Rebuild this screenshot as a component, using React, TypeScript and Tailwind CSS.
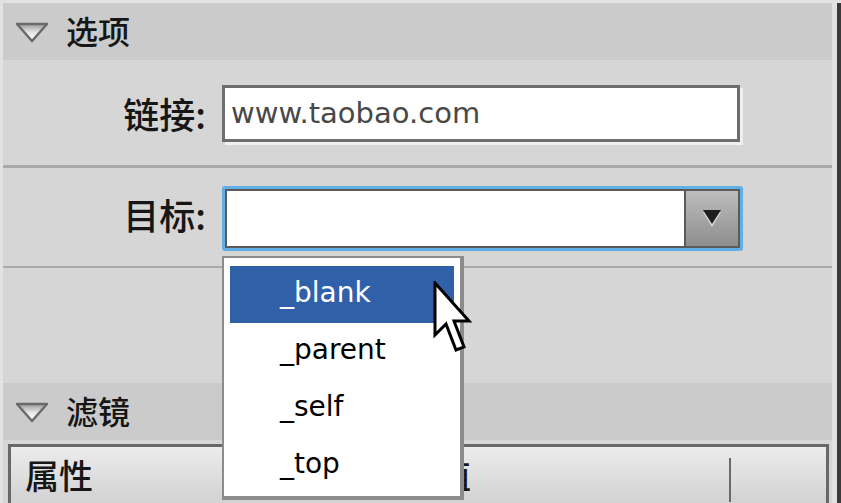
import React from "react";

const cjk = { fontFamily: '"Noto Sans CJK SC", "Noto Sans", sans-serif' };
const latin = { fontFamily: '"DejaVu Sans", Verdana, sans-serif' };

function Disclosure() {
    return (
        <svg width="34" height="22" viewBox="0 0 34 22">
            <defs>
                <linearGradient id="tri" x1="0" y1="0" x2="0" y2="1">
                    <stop offset="0" stopColor="#9a9a9a" />
                    <stop offset="0.5" stopColor="#e6e6e6" />
                    <stop offset="1" stopColor="#ffffff" />
                </linearGradient>
            </defs>
            <polygon points="2,3 32,3 17,20" fill="url(#tri)" stroke="#6a6a6a" strokeWidth="2.5" strokeLinejoin="round" />
        </svg>
    );
}

function SectionHeader({ title }: { title: string }) {
    return (
        <div className="h-[57px] bg-[#cbcbcb] flex items-center pl-[12px] gap-[17px]">
            <Disclosure />
            <span className="text-[32px] leading-none font-medium text-[#161616] pb-[4px]" style={cjk}>{title}</span>
        </div>
    );
}

function Label({ text }: { text: string }) {
    return (
        <div className="w-[203px] text-right text-[36px] leading-none font-medium text-[#161616] pt-[10px]" style={cjk}>
            {text}
        </div>
    );
}

function Cursor() {
    return (
        <svg width="40" height="74" viewBox="0 0 40 74">
            <polygon
                points="2,2 2,54 13,43 23,69 31,66 21,40 36,40"
                fill="#ffffff"
                stroke="#000000"
                strokeWidth="3"
                strokeLinejoin="miter"
            />
        </svg>
    );
}

const targets = ["_blank", "_parent", "_self", "_top"];

export default function App() {
    return (
        <div className="relative w-[841px] h-[503px] overflow-hidden bg-[#e2e2e2] flex pl-[3px] pt-[3px]">
            <div className="w-[829px] flex flex-col bg-[#d6d6d6]">
                <SectionHeader title="选项" />

                {/* link row */}
                <div className="h-[105px] flex items-start pt-[25px]">
                    <Label text="链接:" />
                    <div className="ml-[16px] w-[518px] h-[57px] border-[3px] border-[#6e6e6e] bg-white shadow-[3px_3px_0_0_#f0f0f0] flex items-center pl-[6px]">
                        <span className="text-[29px] leading-none text-[#484848]" style={latin}>www.taobao.com</span>
                    </div>
                </div>
                <div className="h-[3px] bg-[#a9a9a9]" />

                {/* target row */}
                <div className="h-[98px] flex items-start pt-[18px]">
                    <Label text="目标:" />
                    <div className="ml-[16px] w-[521px] h-[65px] border-[3px] border-[#62aee6] rounded-[3px]">
                        <div className="h-full border-[2px] border-[#5a5a5a] flex">
                            <div className="flex-1 bg-white border-r-[2px] border-[#5a5a5a]" />
                            <div className="w-[52px] bg-gradient-to-b from-[#bdbdbd] to-[#8e8e8e] flex items-center justify-center">
                                <svg width="22" height="22" viewBox="0 0 22 22">
                                    <polygon points="2,4 20,4 11,19" fill="#d8d8d8" />
                                    <polygon points="2,2 20,2 11,16" fill="#1e1e1e" />
                                </svg>
                            </div>
                        </div>
                    </div>
                </div>
                <div className="h-[2px] bg-[#a9a9a9]" />

                <div className="h-[115px]" />

                <SectionHeader title="滤镜" />

                <div className="h-[4px]" />
                <div className="ml-[5px] w-[821px] flex-1 border-t-[3px] border-x-[3px] border-[#686868] bg-gradient-to-b from-[#ececec] to-[#d2d2d2] flex items-start pt-[11px]">
                    <div className="w-[426px] pl-[14px] text-[34px] leading-none font-medium text-[#161616]" style={cjk}>属性</div>
                    <div className="w-[292px] text-[34px] leading-none font-medium text-[#161616]" style={cjk}>值</div>
                    <div className="w-[2px] h-[44px] bg-[#6a6a6a]" />
                </div>
            </div>
            <div className="w-[5px] bg-[#e2e2e2]" />
            <div className="w-[4px] bg-[#3a3a3a]" />

            {/* open dropdown list */}
            <div className="absolute left-[222px] top-[256px] w-[242px] h-[244px] bg-white border-[2px] border-[#8c8c8c] border-r-[4px] border-b-[4px] px-[6px] pt-[8px] flex flex-col">
                {targets.map((t, i) => (
                    <div
                        key={t}
                        className={
                            i === 0
                                ? "h-[57px] bg-[#3060a8] text-white flex items-center pl-[50px]"
                                : "h-[57px] text-black flex items-center pl-[50px]"
                        }
                    >
                        <span className="text-[28px] leading-none pb-[4px]" style={latin}>{t}</span>
                    </div>
                ))}
            </div>

            <div className="absolute left-[433px] top-[281px]">
                <Cursor />
            </div>
        </div>
    );
}
